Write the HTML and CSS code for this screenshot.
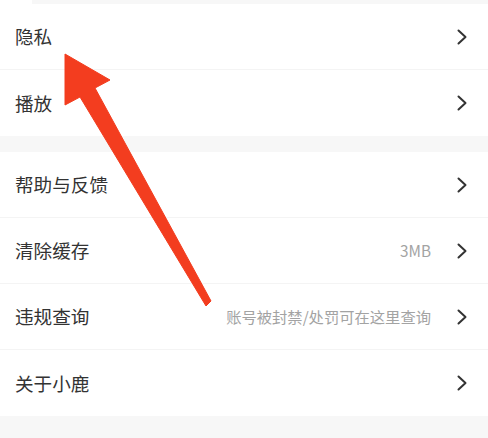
FILE: index.html
```html
<!DOCTYPE html>
<html lang="zh-CN">
<head>
<meta charset="utf-8">
<link rel="stylesheet" href="styles.css">
</head>
<body>
<div class="page">
  <div class="top-strip"></div>
  <section class="group">
    <div class="row"><span class="label">隐私</span><span class="right"><svg class="chev" viewBox="0 0 10 16"><path d="M1.5 1.5 L8.5 8 L1.5 14.5"/></svg></span></div>
    <div class="row"><span class="label">播放</span><span class="right"><svg class="chev" viewBox="0 0 10 16"><path d="M1.5 1.5 L8.5 8 L1.5 14.5"/></svg></span></div>
  </section>
  <div class="gap"></div>
  <section class="group">
    <div class="row"><span class="label">帮助与反馈</span><span class="right"><svg class="chev" viewBox="0 0 10 16"><path d="M1.5 1.5 L8.5 8 L1.5 14.5"/></svg></span></div>
    <div class="row"><span class="label">清除缓存</span><span class="right"><span class="hint">3MB</span><svg class="chev" viewBox="0 0 10 16"><path d="M1.5 1.5 L8.5 8 L1.5 14.5"/></svg></span></div>
    <div class="row"><span class="label">违规查询</span><span class="right"><span class="hint">账号被封禁/处罚可在这里查询</span><svg class="chev" viewBox="0 0 10 16"><path d="M1.5 1.5 L8.5 8 L1.5 14.5"/></svg></span></div>
    <div class="row"><span class="label">关于小鹿</span><span class="right"><svg class="chev" viewBox="0 0 10 16"><path d="M1.5 1.5 L8.5 8 L1.5 14.5"/></svg></span></div>
  </section>
  <div class="gap bottom"></div>
  <svg class="arrow" viewBox="0 0 488 438" width="488" height="438">
    <polygon points="65,54 110,80 95,88 211,301 206,306 80,97 65,105" />
  </svg>
</div>
</body>
</html>
```

FILE: styles.css
```css
html, body {
  margin: 0;
  padding: 0;
  background: #ffffff;
}
.page {
  position: relative;
  width: 488px;
  height: 438px;
  overflow: hidden;
  font-family: "Noto Sans CJK SC", "Noto Sans", sans-serif;
  color: #333333;
}
.top-strip {
  height: 4px;
  margin-left: 32px;
  background: #f7f7f7;
}
.group {
  background: #ffffff;
}
.row {
  height: 66px;
  display: flex;
  align-items: center;
  justify-content: space-between;
  padding: 0 21px 0 15px;
  box-sizing: border-box;
  border-bottom: 1px solid #f4f4f4;
}
.row:last-child {
  border-bottom: none;
}
.label {
  font-size: 18.6px;
  line-height: 1;
}
.right {
  display: flex;
  align-items: center;
  gap: 26px;
}
.hint {
  font-size: 15.3px;
  color: #a3a3a3;
  line-height: 1;
}
.chev {
  width: 10px;
  height: 16px;
  display: block;
}
.chev path {
  fill: none;
  stroke: #333333;
  stroke-width: 2;
  stroke-linecap: round;
  stroke-linejoin: round;
}
.gap {
  height: 16px;
  background: #f7f7f7;
}
.gap.bottom {
  height: 22px;
}
.arrow {
  position: absolute;
  left: 0;
  top: 0;
}
.arrow polygon {
  fill: #f33d1f;
  stroke: #f33d1f;
  stroke-width: 1;
  stroke-linejoin: round;
}
```
